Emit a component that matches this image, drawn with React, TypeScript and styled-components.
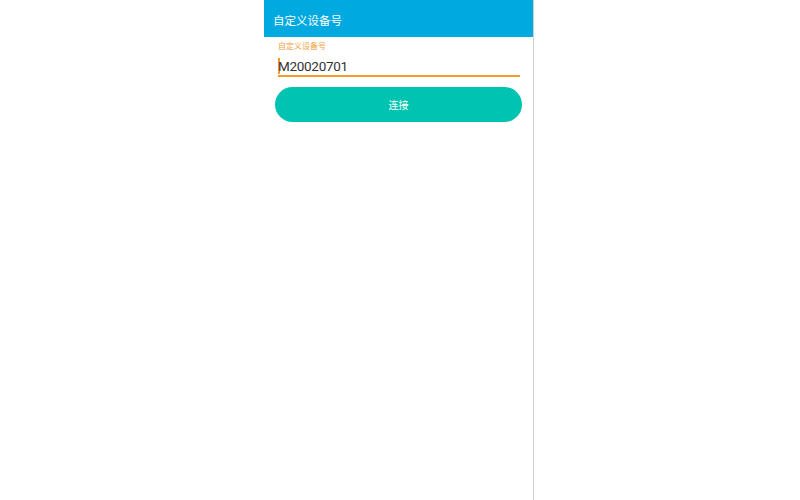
import React from 'react';
import styled, { createGlobalStyle } from 'styled-components';

const GlobalStyle = createGlobalStyle`
  html, body {
    margin: 0;
    padding: 0;
    background: #ffffff;
  }
  body {
    font-family: Roboto, "Noto Sans CJK SC", sans-serif;
  }
`;

const Page = styled.div`
  display: flex;
  justify-content: flex-start;
  height: 500px;
  padding-left: 264px;
`;

const Phone = styled.div`
  width: 269px;
  height: 500px;
  border-right: 1px solid #cfcfcf;
  background: #ffffff;
  display: flex;
  flex-direction: column;
`;

const Header = styled.div`
  height: 37px;
  background-color: #00a9e0;
  color: #ffffff;
  font-size: 11.5px;
  display: flex;
  align-items: center;
  padding: 3px 0 0 9px;
  box-sizing: border-box;
`;

const Form = styled.div`
  display: flex;
  flex-direction: column;
  padding: 5px 11px 0 11px;
`;

const Field = styled.div`
  display: flex;
  flex-direction: column;
  padding: 0 2px 0 3px;
`;

const Label = styled.span`
  font-size: 8px;
  color: #f2a13e;
  line-height: 10px;
`;

const InputRow = styled.div`
  display: flex;
  align-items: center;
  height: 18px;
  margin-top: 5px;
  border-bottom: 2px solid #f39a2b;
`;

const Cursor = styled.span`
  width: 2px;
  height: 16px;
  background: #f39a2b;
  margin-right: -2px;
`;

const Value = styled.span`
  font-size: 13.5px;
  letter-spacing: -0.3px;
  color: #333333;
  line-height: 18px;
`;

const ConnectButton = styled.button`
  margin-top: 10px;
  height: 35px;
  width: 247px;
  border: none;
  border-radius: 18px;
  background-color: #00c4b1;
  color: #ffffff;
  font-family: Roboto, "Noto Sans CJK SC", sans-serif;
  font-size: 10px;
  cursor: pointer;
`;

export default function App() {
  return (
    <>
      <GlobalStyle />
      <Page>
        <Phone>
          <Header>自定义设备号</Header>
          <Form>
            <Field>
              <Label>自定义设备号</Label>
              <InputRow>
                <Cursor />
                <Value>M20020701</Value>
              </InputRow>
            </Field>
            <ConnectButton>连接</ConnectButton>
          </Form>
        </Phone>
      </Page>
    </>
  );
}
